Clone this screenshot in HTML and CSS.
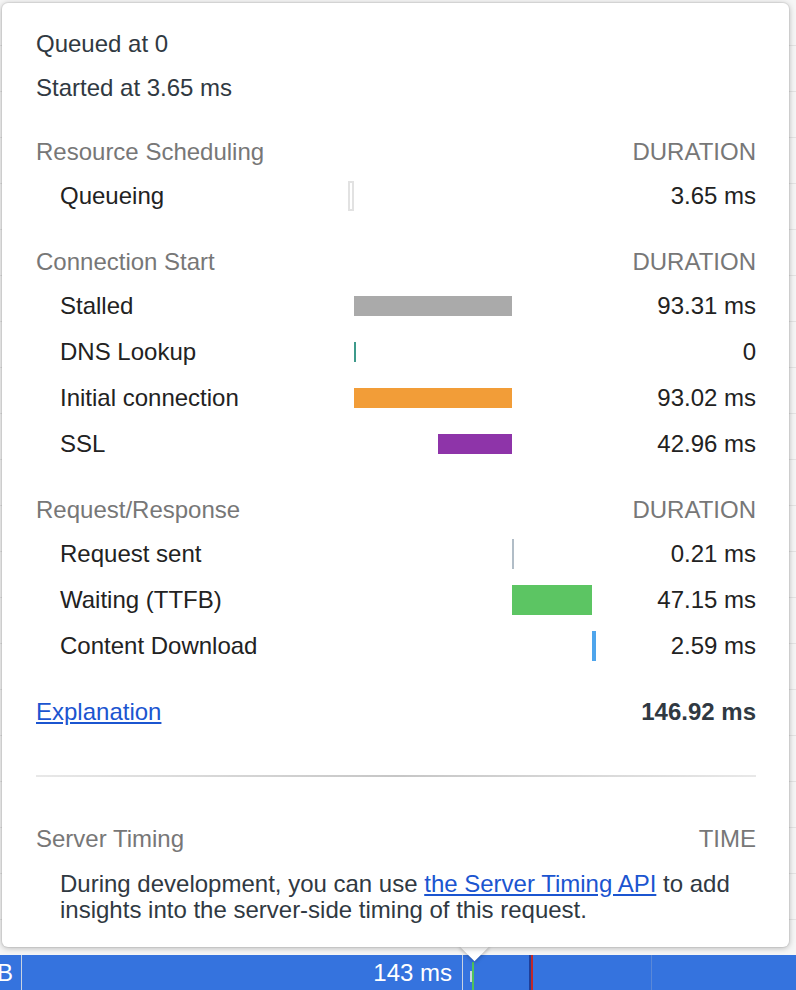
FILE: index.html
```html
<!DOCTYPE html>
<html>
<head>
<meta charset="utf-8">
<link rel="stylesheet" href="styles.css">
</head>
<body>
<div class="stage">
  <div class="popup">
    <div class="line">Queued at 0</div>
    <div class="line">Started at 3.65 ms</div>

    <section class="section first">
      <div class="row head"><span class="label">Resource Scheduling</span><span class="value">DURATION</span></div>
      <div class="row item"><span class="label">Queueing</span><span class="track"><span class="bar tall queueing" style="margin-left:0;width:6px"></span></span><span class="value">3.65 ms</span></div>
    </section>

    <section class="section">
      <div class="row head"><span class="label">Connection Start</span><span class="value">DURATION</span></div>
      <div class="row item"><span class="label">Stalled</span><span class="track"><span class="bar stalled" style="margin-left:6px;width:158px"></span></span><span class="value">93.31 ms</span></div>
      <div class="row item"><span class="label">DNS Lookup</span><span class="track"><span class="bar dns" style="margin-left:6px;width:2px"></span></span><span class="value">0</span></div>
      <div class="row item"><span class="label">Initial connection</span><span class="track"><span class="bar connecting" style="margin-left:6px;width:158px"></span></span><span class="value">93.02 ms</span></div>
      <div class="row item"><span class="label">SSL</span><span class="track"><span class="bar ssl" style="margin-left:90px;width:74px"></span></span><span class="value">42.96 ms</span></div>
    </section>

    <section class="section">
      <div class="row head"><span class="label">Request/Response</span><span class="value">DURATION</span></div>
      <div class="row item"><span class="label">Request sent</span><span class="track"><span class="bar tall sending" style="margin-left:164px;width:2px"></span></span><span class="value">0.21 ms</span></div>
      <div class="row item"><span class="label">Waiting (TTFB)</span><span class="track"><span class="bar tall waiting" style="margin-left:164px;width:80px"></span></span><span class="value">47.15 ms</span></div>
      <div class="row item"><span class="label">Content Download</span><span class="track"><span class="bar tall receiving" style="margin-left:244px;width:4px"></span></span><span class="value">2.59 ms</span></div>
    </section>

    <div class="row total"><a class="link" href="#">Explanation</a><span class="value">146.92 ms</span></div>

    <div class="divider"></div>

    <section class="server">
      <div class="row head"><span class="label">Server Timing</span><span class="value">TIME</span></div>
      <p class="note">During development, you can use <a class="link" href="#">the Server Timing API</a> to add<br>insights into the server-side timing of this request.</p>
    </section>
  </div>
  <div class="arrow"></div>
</div>
<div class="timebar">
  <div class="cell c1">B</div>
  <div class="cell c2">143 ms</div>
  <div class="cell c3">
    <span class="mark stub"></span>
    <span class="mark green"></span>
    <span class="mark navy"></span>
    <span class="mark red"></span>
  </div>
  <div class="cell c4"></div>
</div>
</body>
</html>
```

FILE: styles.css
```css
html, body {
  margin: 0;
  padding: 0;
}

body {
  width: 796px;
  height: 990px;
  overflow: hidden;
  font-family: "Liberation Sans", Arial, Helvetica, sans-serif;
  background: #ffffff;
}

.stage {
  position: relative;
  height: 955px;
  box-sizing: border-box;
  padding: 3px 7px 0 2px;
  background-color: #f6f6f6;
  background-image: repeating-linear-gradient(to bottom, transparent 0, transparent 45px, #e4e4e4 45px, #e4e4e4 46px);
}

.popup {
  position: relative;
  z-index: 3;
  width: 787px;
  height: 944px;
  box-sizing: border-box;
  padding: 19px 33px 0 34px;
  background: #ffffff;
  border-radius: 6px;
  box-shadow: 0 0 0 1px rgba(0, 0, 0, 0.05), 0 1px 6px rgba(0, 0, 0, 0.28);
  font-size: 24px;
  color: #222222;
}

.arrow {
  position: absolute;
  z-index: 2;
  left: 464px;
  top: 936px;
  width: 21px;
  height: 21px;
  background: #ffffff;
  transform: rotate(45deg);
  box-shadow: 1px 1px 4px rgba(0, 0, 0, 0.25);
}

.line {
  height: 44px;
  display: flex;
  align-items: center;
  color: #303942;
}

.section {
  margin-top: 22px;
}

.section.first {
  margin-top: 21px;
}

.row {
  display: grid;
  grid-template-columns: 312px 252px 1fr;
  align-items: center;
}

.head {
  height: 42px;
  color: #777777;
}

.head .label {
  grid-column: 1 / 3;
}

.item {
  height: 46px;
}

.item .label {
  padding-left: 24px;
}

.value {
  text-align: right;
  white-space: nowrap;
}

.track {
  display: flex;
  align-items: center;
  height: 100%;
}

.bar {
  flex: none;
  height: 20px;
}

.bar.tall {
  height: 30px;
}

.queueing {
  box-sizing: border-box;
  border: 2px solid #e2e2e2;
  background: #ffffff;
}

.stalled { background: #aaaaaa; }
.dns { background: #3e9a8b; }
.connecting { background: #f29d38; }
.ssl { background: #8e34a9; }
.sending { background: #b1bdc7; }
.waiting { background: #5cc563; }
.receiving { background: #4ea5ec; }

.total {
  margin-top: 20px;
  height: 46px;
}

.total .link {
  grid-column: 1 / 3;
  justify-self: start;
}

.total .value {
  font-weight: bold;
  color: #303942;
}

.link {
  color: #1b55d0;
  text-decoration: underline;
}

.divider {
  margin-top: 40px;
  height: 2px;
  background: linear-gradient(to right, #e8e8e8, #c6c6c6 50%, #e8e8e8);
}

.server {
  margin-top: 41px;
}

.note {
  margin: 11px 0 0 24px;
  line-height: 26px;
  color: #303942;
  white-space: nowrap;
}

.timebar {
  display: flex;
  height: 35px;
  background: #3573de;
  color: #ffffff;
  font-size: 24px;
}

.cell {
  box-sizing: border-box;
  height: 100%;
  display: flex;
  align-items: center;
}

.c1 {
  width: 22px;
  justify-content: flex-end;
  padding-right: 8px;
  border-right: 1px solid #c9d3e2;
  overflow: hidden;
}

.c2 {
  width: 441px;
  justify-content: flex-end;
  padding-right: 10px;
  border-right: 1px solid #c9d3e2;
}

.c3 {
  width: 189px;
  align-items: stretch;
  border-right: 1px solid #5a88d8;
}

.c4 {
  flex: 1;
}

.mark {
  display: block;
  flex: none;
}

.stub {
  width: 2px;
  margin: 16px 0 8px 7px;
  background: #c9d4e4;
}

.green {
  width: 2px;
  margin-top: 7px;
  background: #4fc25a;
}

.navy {
  width: 2px;
  margin-left: 55px;
  background: #1f3f9a;
}

.red {
  width: 2px;
  background: #c0282a;
}
```
